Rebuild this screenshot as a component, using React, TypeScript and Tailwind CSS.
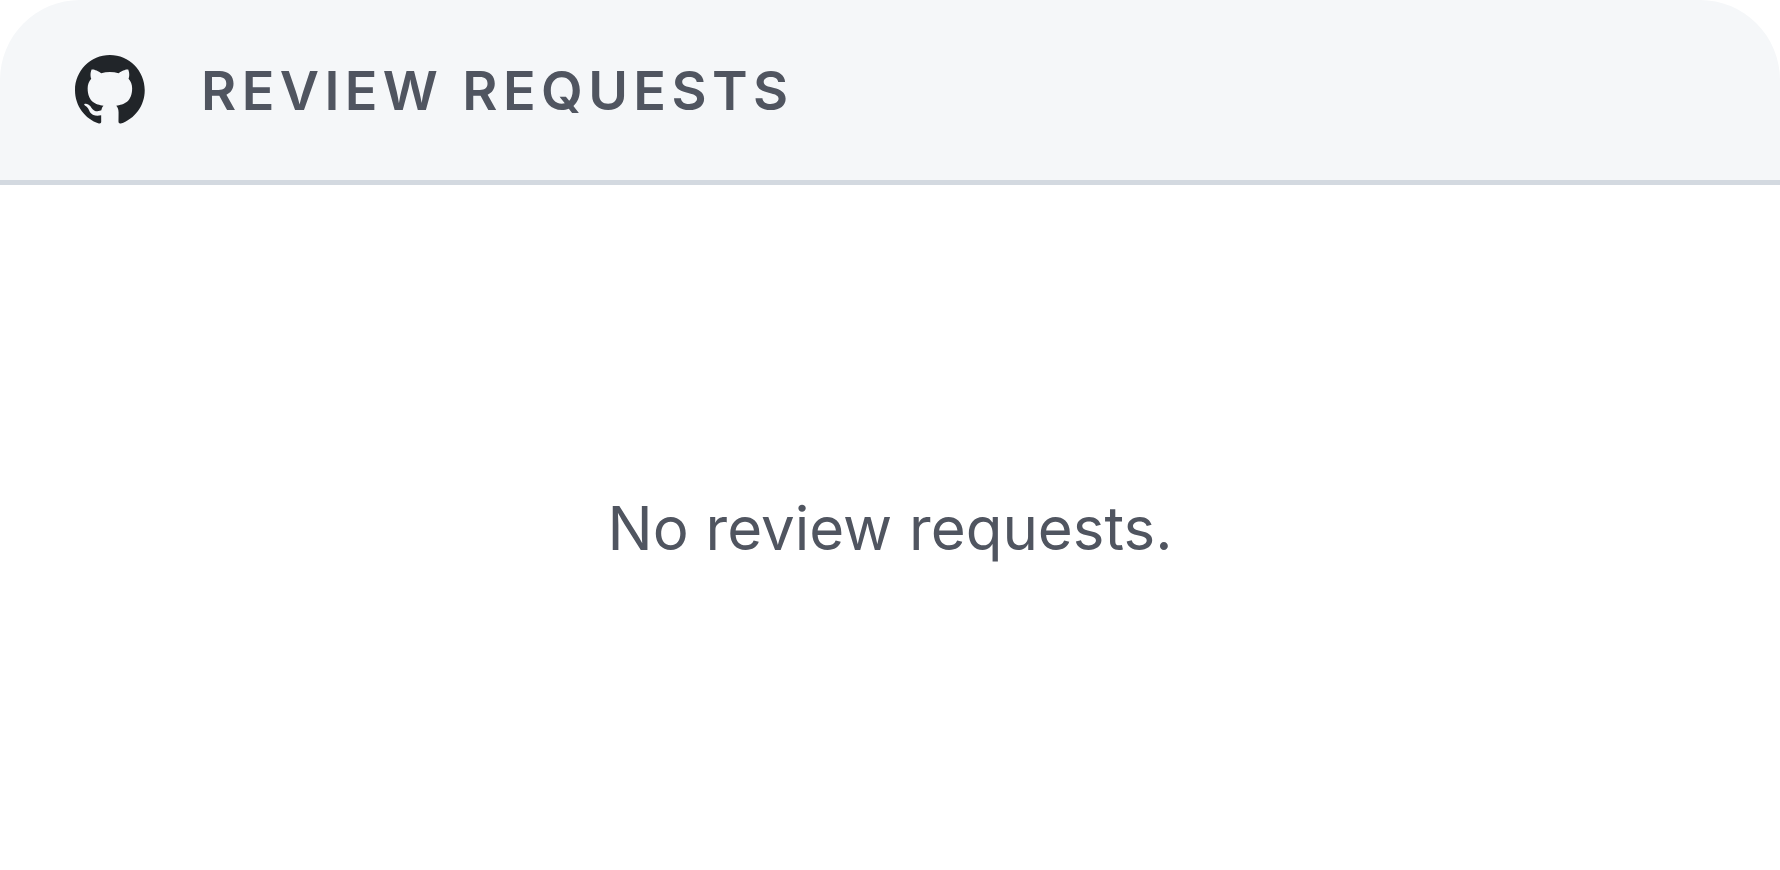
function GithubMark() {
    return (
        <svg viewBox="0 0 98 96" className="w-[70px] shrink-0 text-[#212529]" fill="currentColor" role="img" aria-label="GitHub">
            <path
                fillRule="evenodd"
                clipRule="evenodd"
                d="M48.854 0C21.839 0 0 22 0 49.217c0 21.756 13.993 40.172 33.405 46.69 2.427.49 3.316-1.059 3.316-2.362 0-1.141-.08-5.052-.08-9.127-13.59 2.934-16.42-5.867-16.42-5.867-2.184-5.704-5.42-7.17-5.42-7.17-4.448-3.015.324-3.015.324-3.015 4.934.326 7.523 5.052 7.523 5.052 4.367 7.496 11.404 5.378 14.235 4.074.404-3.178 1.699-5.378 3.074-6.6-10.839-1.141-22.243-5.378-22.243-24.283 0-5.378 1.94-9.778 5.014-13.2-.485-1.222-2.184-6.275.486-13.038 0 0 4.125-1.304 13.426 5.052a46.97 46.97 0 0 1 12.214-1.63c4.125 0 8.33.571 12.213 1.63 9.302-6.356 13.427-5.052 13.427-5.052 2.67 6.763.97 11.816.485 13.038 3.155 3.422 5.015 7.822 5.015 13.2 0 18.905-11.404 23.06-22.324 24.283 1.78 1.548 3.316 4.481 3.316 9.126 0 6.6-.08 11.897-.08 13.526 0 1.304.89 2.853 3.316 2.364 19.412-6.52 33.405-24.935 33.405-46.691C97.707 22 75.788 0 48.854 0z"
            />
        </svg>
    );
}

export default function App() {
    return (
        <section className="flex min-h-screen flex-col rounded-t-[80px] bg-white font-['Inter',sans-serif] text-[#505560]">
            <header className="flex items-start gap-14 rounded-t-[80px] border-b-[5px] border-[#d3d9e0] bg-[#f5f7f9] px-[75px] pt-[55px] pb-[53px]">
                <GithubMark />
                <h1 className="text-[54px]/[72px] font-semibold tracking-widest uppercase">Review Requests</h1>
            </header>
            <div className="flex flex-1 items-center justify-center">
                <p className="text-[60px]/[72px]">No review requests.</p>
            </div>
        </section>
    );
}
